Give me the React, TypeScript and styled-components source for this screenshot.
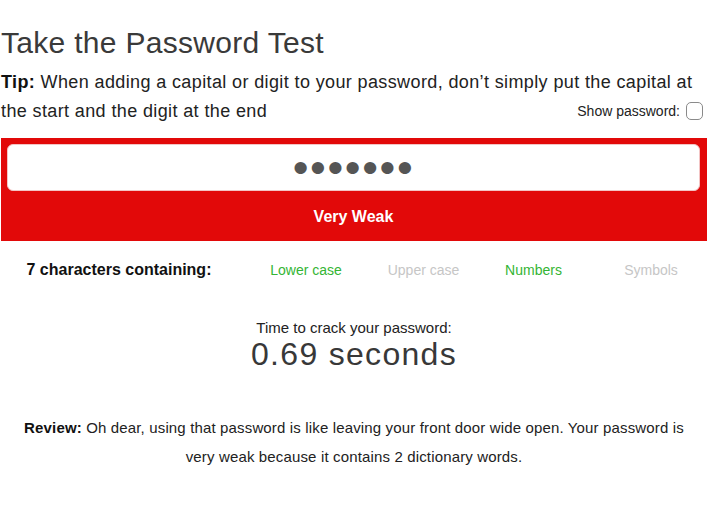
import React, { useState } from "react";
import styled, { createGlobalStyle } from "styled-components";

const GlobalStyle = createGlobalStyle`
  body {
    margin: 0;
    background: #fff;
    font-family: "Liberation Sans", Arial, Helvetica, sans-serif;
    color: #222;
  }
`;

const Page = styled.div`
  width: 707px;
  padding-left: 1px;
  box-sizing: border-box;
`;

const Title = styled.h1`
  margin: 25px 0 0 0;
  font-size: 30px;
  line-height: 36px;
  font-weight: normal;
  letter-spacing: 0.3px;
  color: #3a3a3a;
`;

const Tip = styled.p`
  margin: 7px 0 0 0;
  font-size: 18px;
  line-height: 29px;
  letter-spacing: 0.38px;
  color: #222;

  b {
    color: #111;
  }
`;

const ShowToggle = styled.label`
  float: right;
  display: flex;
  align-items: center;
  gap: 6px;
  margin-right: 4px;
  font-size: 14px;
  letter-spacing: 0;
  color: #222;
`;

const Check = styled.input`
  appearance: none;
  width: 17px;
  height: 18px;
  margin: 0;
  border: 1.5px solid #8a8a8a;
  border-radius: 5px;
  background: #fff;
  box-sizing: border-box;
  position: relative;
  top: -1px;
`;

const Meter = styled.div<{ $color: string }>`
  margin-top: 12px;
  background: ${(p) => p.$color};
  padding: 6px 7px 0 6px;
`;

const Field = styled.input`
  display: block;
  width: 100%;
  height: 47px;
  box-sizing: border-box;
  border: 1px solid #f3c4c4;
  border-radius: 6px;
  background: #fff;
  text-align: center;
  font-family: "Liberation Sans", Arial, sans-serif;
  font-size: 45px;
  letter-spacing: 1.6px;
  color: #555;
  outline: none;
  padding: 1px 0 0 0;
`;

const Strength = styled.div`
  padding: 17px 0 15px;
  text-align: center;
  font-size: 16px;
  line-height: 18px;
  font-weight: bold;
  color: #fff;
`;

const Checks = styled.div`
  margin-top: 19px;
  display: grid;
  grid-template-columns: 236px 138px 97px 123px 1fr;
  align-items: baseline;
  justify-items: center;
  line-height: 20px;
`;

const Count = styled.div`
  font-size: 16px;
  font-weight: bold;
  color: #111;
`;

const Rule = styled.div<{ $met: boolean }>`
  font-size: 14px;
  color: ${(p) => (p.$met ? "#34b534" : "#c6c6c6")};
`;

const Crack = styled.div`
  margin-top: 39px;
  text-align: center;
`;

const CrackLabel = styled.div`
  font-size: 15px;
  line-height: 18px;
  color: #222;
`;

const CrackTime = styled.div`
  font-size: 32px;
  line-height: 34px;
  letter-spacing: 1.3px;
  color: #383838;
`;

const Review = styled.p`
  margin: 42px 0 0 0;
  padding: 0 10px;
  text-align: center;
  font-size: 15px;
  line-height: 29px;
  letter-spacing: 0.15px;
  color: #222;

  b {
    color: #111;
  }
`;

const rules = [
  { label: "Lower case", met: true },
  { label: "Upper case", met: false },
  { label: "Numbers", met: true },
  { label: "Symbols", met: false },
];

export default function App() {
  const [show, setShow] = useState(false);
  const password = "dogcat7";

  return (
    <Page>
      <GlobalStyle />
      <Title>Take the Password Test</Title>
      <Tip>
        <b>Tip:</b> When adding a capital or digit to your password, don’t
        simply put the capital at the start and the digit at the end
        <ShowToggle>
          Show password:
          <Check
            type="checkbox"
            checked={show}
            onChange={(e) => setShow(e.target.checked)}
          />
        </ShowToggle>
      </Tip>
      <Meter $color="#e20909">
        <Field type={show ? "text" : "password"} value={password} readOnly />
        <Strength>Very Weak</Strength>
      </Meter>
      <Checks>
        <Count>{password.length} characters containing:</Count>
        {rules.map((r) => (
          <Rule key={r.label} $met={r.met}>
            {r.label}
          </Rule>
        ))}
      </Checks>
      <Crack>
        <CrackLabel>Time to crack your password:</CrackLabel>
        <CrackTime>0.69 seconds</CrackTime>
      </Crack>
      <Review>
        <b>Review:</b> Oh dear, using that password is like leaving your front
        door wide open. Your password is very weak because it contains 2
        dictionary words.
      </Review>
    </Page>
  );
}
